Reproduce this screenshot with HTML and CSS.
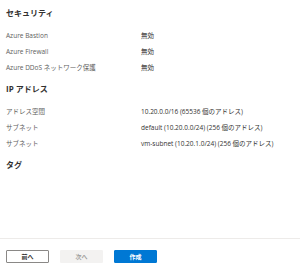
FILE: index.html
```html
<!DOCTYPE html>
<html lang="ja">
<head>
  <meta charset="UTF-8" />
  <meta name="viewport" content="width=device-width, initial-scale=1" />
  <title>確認および作成</title>
  <link rel="stylesheet" href="styles.css">
</head>
<body>

  <main class="review">
    <section class="group">
      <h2>セキュリティ</h2>
      <div class="row"><span class="label">Azure Bastion</span><span class="value">無効</span></div>
      <div class="row"><span class="label">Azure Firewall</span><span class="value">無効</span></div>
      <div class="row"><span class="label">Azure DDoS ネットワーク保護</span><span class="value">無効</span></div>
    </section>

    <section class="group">
      <h2>IP アドレス</h2>
      <div class="row"><span class="label">アドレス空間</span><span class="value">10.20.0.0/16 (65536 個のアドレス)</span></div>
      <div class="row"><span class="label">サブネット</span><span class="value">default (10.20.0.0/24) (256 個のアドレス)</span></div>
      <div class="row"><span class="label">サブネット</span><span class="value">vm-subnet (10.20.1.0/24) (256 個のアドレス)</span></div>
    </section>

    <section class="group">
      <h2>タグ</h2>
    </section>
  </main>

  <footer class="actions">
    <button class="btn">前へ</button>
    <button class="btn" disabled>次へ</button>
    <button class="btn primary">作成</button>
  </footer>

</body>
</html>
```

FILE: styles.css
```css
html, body {
  height: 100%;
}

body {
  margin: 0;
  font-family: "Open Sans", "Noto Sans CJK JP", sans-serif;
  color: #323130;
  background-color: #ffffff;
  display: flex;
  flex-direction: column;
}

.review {
  flex: 1;
  padding: 6px 6px 0;
}

.group {
  margin-bottom: 6px;
}

.group h2 {
  margin: 0 0 8px;
  font-size: 8px;
  line-height: 14px;
  font-weight: bold;
  color: #323130;
}

.row {
  display: grid;
  grid-template-columns: 135px 1fr;
  font-size: 6.5px;
  line-height: 16px;
}

.label {
  color: #605e5c;
}

.value {
  color: #323130;
}

.actions {
  border-top: 1px solid #edebe9;
  padding: 11px 6px 8px;
  display: flex;
  gap: 11px;
}

.btn {
  width: 43px;
  height: 13px;
  padding: 0;
  font-family: inherit;
  font-size: 6px;
  font-weight: bold;
  border: 1px solid #8a8886;
  border-radius: 1px;
  background-color: #ffffff;
  color: #323130;
}

.btn:disabled {
  border-color: #f3f2f1;
  background-color: #f3f2f1;
  color: #a19f9d;
}

.btn.primary {
  border-color: #0078d4;
  background-color: #0078d4;
  color: #ffffff;
}
```
